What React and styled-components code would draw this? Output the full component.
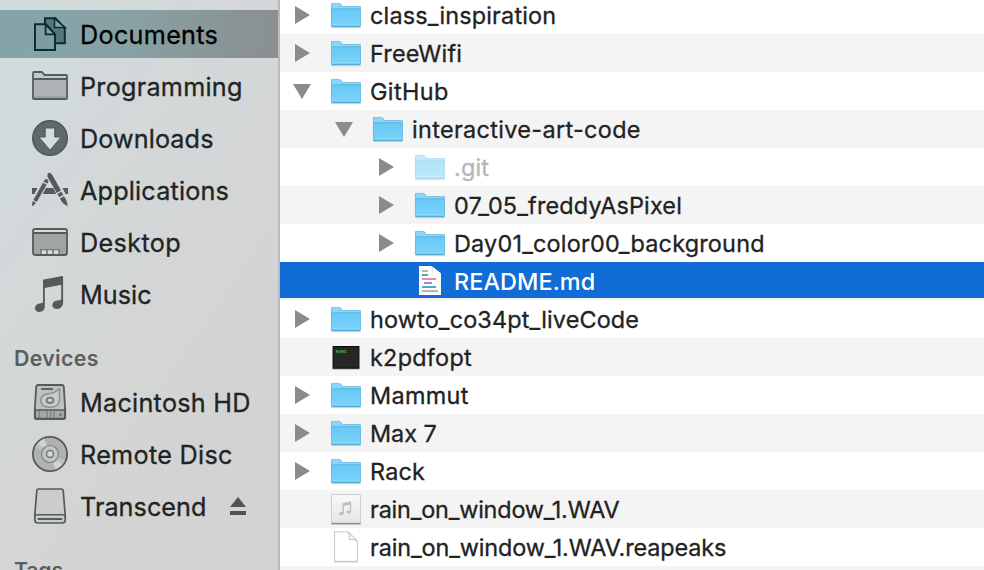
import React from "react";
import styled, { createGlobalStyle } from "styled-components";

const GlobalStyle = createGlobalStyle`
  * { box-sizing: border-box; }
  html, body { margin: 0; padding: 0; overflow: hidden; background: #fff; }
  body { font-family: Inter, "Noto Sans", sans-serif; }
`;

const Window = styled.div`
  display: flex;
  width: 984px;
  height: 570px;
  overflow: hidden;
  background: #fff;
`;

const Sidebar = styled.nav`
  flex: 0 0 280px;
  height: 570px;
  padding-top: 10px;
  overflow: hidden;
  border-right: 2px solid #bababa;
  background:
    linear-gradient(125deg, #d1dcdd 0%, #d2d9da 22%, #d4d6d6 50%, #d3d3d3 72%, #d3d3d3 100%);
`;

const SidebarItem = styled.div`
  display: flex;
  align-items: center;
  gap: 12px;
  height: 48px;
  margin-bottom: 4px;
  padding-left: 32px;
  background: ${(p) => (p.$selected ? "linear-gradient(100deg, #86a4a8 0%, #87a2a5 45%, #8a9394 85%, #8b9091 100%)" : "none")};
  color: ${(p) => (p.$selected ? "#000" : "#202424")};
`;

const SidebarIcon = styled.svg`
  flex: none;
  display: block;
  width: 36px;
  height: 36px;
  color: #555a5a;
`;

const SidebarLabel = styled.span`
  font-size: 25.2px;
  line-height: 30px;
  white-space: pre;
  letter-spacing: ${(p) => p.$tracking}px;
  -webkit-text-stroke: 0.3px currentColor;
  transform: translateY(1px);
`;

const EjectIcon = styled.svg`
  flex: none;
  width: 16px;
  height: 18px;
  margin-left: auto;
  margin-right: 32px;
  fill: #525252;
`;

const SectionHeading = styled.h2`
  height: 56px;
  margin: 0;
  padding: 22px 0 0 14px;
  color: #5b5e5e;
  font-size: 21.3px;
  font-weight: 600;
  line-height: 28px;
  letter-spacing: ${(p) => p.$tracking}px;
`;

const FileList = styled.main`
  flex: 1;
  min-width: 0;
  margin-top: -4px;
`;

const rowFill = (p) => {
  if (p.$selected) return "linear-gradient(#116cd6 36px, #f4f4f4 36px)";
  return p.$striped ? "#f4f4f4" : "#fff";
};

const rowColor = (p) => {
  if (p.$selected) return "#fff";
  return p.$dimmed ? "#b6b6b6" : "#222";
};

const FileRow = styled.div`
  display: flex;
  align-items: center;
  height: 38px;
  padding-left: ${(p) => 12 + p.$depth * 42}px;
  background: ${rowFill};
  color: ${rowColor};
`;

const DisclosureSlot = styled.span`
  flex: none;
  display: flex;
  align-items: center;
  justify-content: center;
  width: 20px;
  height: 32px;
  margin-right: 18px;
`;

const DisclosureArrow = styled.svg`
  width: 20px;
  height: 20px;
  fill: #8b8b8b;
`;

const FileIcon = styled.svg`
  flex: none;
  display: block;
  width: 32px;
  height: 32px;
  margin-right: 8px;
  overflow: visible;
  opacity: ${(p) => (p.$dimmed ? 0.5 : 1)};
`;

const FileName = styled.span`
  padding-top: 2px;
  font-size: 23.4px;
  font-weight: ${(p) => (p.$selected ? 500 : 400)};
  line-height: 30px;
  white-space: pre;
  letter-spacing: ${(p) => p.$tracking}px;
  -webkit-text-stroke: ${(p) => (p.$selected ? "0" : "0.3px")} currentColor;
`;

const icons = {
  documents: (
    <g fill="none" stroke="#092d33" strokeWidth="2">
      <path d="M13 8V2.3h10.5l9.3 10v15H24" fill="#56777c" />
      <path d="M22.5 2.500V11.500H33z" fill="#86a4a8" strokeWidth="1.6" />
      <path d="M3 8.2h11L23 18.5V34H3z" fill="#7f9da1" />
      <path d="M13.6 8.5V18.4H23z" fill="#86a4a8" strokeWidth="1.8" />
    </g>
  ),
  folder: (
    <g>
      <path d="M1 30V5.2Q1 4 2.2 4H10l2.5 3H34q1 0 1 1V30q0 1-1 1H2q-1 0-1-1z" fill="#c3cacb" />
      <path d="M2 12h32v18H2z" fill="#adb3b4" />
      <path d="M2 28h32v2.5H2z" fill="#9da3a4" />
      <path d="M1 30V5.2Q1 4 2.2 4H10l2.5 3H34q1 0 1 1V30q0 1-1 1H2q-1 0-1-1zM1 11h34" fill="none" stroke="currentColor" strokeWidth="1.8" />
    </g>
  ),
  downloads: (
    <g>
      <circle cx="18" cy="18" r="17.3" fill="#5f686a" stroke="#4e5658" strokeWidth="1.4" />
      <path d="M13.2 8h9.6v9h6.4L18 30.2 6.8 17h6.4z" fill="#d5dada" stroke="#4e5658" strokeWidth="1" />
    </g>
  ),
  applications: (
    <g fill="currentColor">
      <path d="M0 16h5.6L2.3 22H0zM13.8 16h7.4l3.2 6H10.8zM30.5 16H36v6h-2.4z" />
      <path d="M15.6 2.2Q16.4.3 18.4 1L20.3 3 29 18.6l-4.2 2.5L15.5 5z" />
      <path d="M25.4 22.1l4.1-2.4 1.7 3.1-4 2.4zM28 26.4l3.8-2.2Q35.5 28.5 35.6 34.2 30 31.5 28 26.4z" />
      <path d="M12.2 8.6Q13.2 6.4 15.2 7.3 17 8.3 16.2 10.3L15.2 11.6 11.6 9.7z" />
      <path d="M11 10.8l3.6 2L4.7 30 1.4 28zM.9 29l2.900 1.800Q2.500 33.300.2 34.300q-.4-3 .7-5.300z" />
    </g>
  ),
  desktop: (
    <g>
      <rect x="1" y="5" width="34" height="26" rx="2.2" fill="#9fa4a4" />
      <path d="M2 5.8h32V8H2z" fill="#d5dada" />
      <path d="M8 25h20v6H8z" fill="#777c7c" />
      <path d="M9.7 26.2h4.4v4H9.7zM15.8 26.2h4.4v4h-4.4zM21.9 26.2h4.4v4h-4.4z" fill="#d5dada" />
      <rect x="1" y="5" width="34" height="26" rx="2.2" fill="none" stroke="currentColor" strokeWidth="1.8" />
      <path d="M1 9h34" stroke="currentColor" strokeWidth="1.8" />
    </g>
  ),
  music: (
    <g fill="currentColor">
      <path d="M11 4.6Q11 3.8 11.8 3.6L30.2.1q.9-.1.9.8V28q-1.800 5-6 5-4.600-.2-4.800-3.800.2-3.900 4.900-4.700 4-.3 4-1.500V8.700L12.800 12v19q-.3 4.700-5.400 5-4.200-.2-4.500-3.800.3-4 4.700-4.800Q11 27.200 11 25.800z" />
    </g>
  ),
  hardDisk: (
    <g stroke="currentColor" strokeLinejoin="round">
      <path d="M6.200 1h23.600q1.700 0 2 1.700L33.200 26v7.200q0 1.800-1.800 1.800H4.600q-1.800 0-1.800-1.800V26L4.200 2.700Q4.500 1 6.200 1z" fill="#bfc2c1" strokeWidth="1.800" />
      <path d="M3.200 26h29.600v7q0 1.500-1.500 1.500H4.700q-1.500 0-1.500-1.500z" fill="#a5a9a8" strokeWidth="1.500" />
      <path d="M7.300 27v7M15.200 27v7M18.600 27v7M22 27v7" stroke="#7c807f" strokeWidth="1.300" />
      <path d="M27.600 29.800h1.800v1.800h-1.800z" fill="#4d5050" stroke="none" />
      <path d="M9 5h12" strokeWidth="1.800" />
      <path d="M27.500 4.500V16Q27 23.200 18 23.300 9 22.800 8.800 16.400 9 10.500 17.500 9.600q5-.4 10-5.100z" fill="#c8cbca" stroke="#8a8e8d" strokeWidth="1.500" />
      <ellipse cx="18" cy="16.300" rx="3.400" ry="2.700" fill="#cfd2d1" stroke="#737776" strokeWidth="1.800" />
    </g>
  ),
  disc: (
    <g>
      <circle cx="18" cy="18" r="17.100" fill="#afb2b1" stroke="currentColor" strokeWidth="1.800" />
      <path d="M18 18L5.500 7.500Q8.500 4 12.500 2.600zM18 18l12.500 10.500q-3 3.500-7 4.900z" fill="#d0d3d2" />
      <path d="M18 18L3 11.500 5.500 7.500zM18 18l15 6.500-2.500 4z" fill="#bfc2c1" />
      <circle cx="18" cy="18" r="8.500" fill="#c2c5c4" stroke="#7d8180" strokeWidth="1.200" />
      <circle cx="18" cy="18" r="3.500" fill="#d5d7d7" stroke="#707473" strokeWidth="1.400" />
    </g>
  ),
  externalDisk: (
    <g fill="none" stroke="currentColor">
      <path d="M6.500 1h23q1.500 0 1.700 1.500L33.200 27v5q0 3-3 3H5.800q-3 0-3-3v-5L4.800 2.500Q5 1 6.500 1z" fill="#cbcdcc" strokeWidth="1.700" />
      <path d="M3 28.500Q3.500 26.800 5.500 26.800h25q2 0 2.500 1.700" strokeWidth="1.400" />
      <path d="M6.500 31h23" strokeWidth="2.200" strokeLinecap="round" />
    </g>
  ),
};

const fileIcons = {
  folder: (
    <g>
      <path d="M1.500 28.500h29" stroke="#8a9aa2" strokeOpacity=".45" strokeWidth="1.400" />
      <path d="M1 26.700V5q0-.8.800-.8H9.500q.8 0 1.300.6l1.700 2.400H30q.8 0 .8.800V26.700q0 1-.9 1H1.900q-.9 0-.9-1z" fill="#8cd5f8" />
      <path d="M1 9.800h29.800v16.900q0 1-.9 1H1.900q-.9 0-.9-1z" fill="url(#folderFront)" />
      <path d="M1.500 9.800h29" stroke="#5eb6e0" strokeWidth="1" />
      <path d="M1.500 25.400h29" stroke="#8ddafc" strokeWidth=".8" />
      <path d="M1.400 27.400h29" stroke="#4fa8d1" strokeWidth="1" />
      <path d="M1.400 27V5q0-.6.600-.6H9.500q.6 0 1.100.6l1.800 2.500h17.500q.6 0 .6.600V27" fill="none" stroke="#5fb4dc" strokeOpacity=".75" strokeWidth=".8" />
    </g>
  ),
  markdown: (
    <g>
      <path d="M5 1h12.500l9.500 7.500V30H5z" fill="#fdfdfb" />
      <path d="M17.500 1v2.500q0 5 1.500 5h8z" fill="#e4e4e4" />
      <path d="M19 2.200l8 6.300h-8z" fill="#fff" />
      <path d="M8 6h6M8 26h16" stroke="#b4b4b4" strokeWidth="2" />
      <path d="M8 10h6M8 22h14" stroke="#50adb8" strokeWidth="2" />
      <path d="M8 14h14" stroke="#dc939b" strokeWidth="2" />
      <path d="M10 18h8" stroke="#a57eff" strokeWidth="2" />
    </g>
  ),
  executable: (
    <g>
      <rect x="2" y="5.200" width="28" height="23.600" rx="1" fill="#000" fillOpacity=".22" />
      <rect x="3.200" y="5.500" width="25.600" height="21.700" fill="#262626" stroke="#0a0a0a" />
      <text x="5.800" y="12" fill="#3fc355" fontFamily="Liberation Mono, monospace" fontWeight="700" fontSize="4.600">exec</text>
    </g>
  ),
  audio: (
    <g>
      <rect x="1" y="1.800" width="30" height="30" rx="1" fill="#000" fillOpacity=".2" />
      <rect x="1.500" y="1.500" width="29" height="28.700" rx=".8" fill="url(#audioFace)" stroke="#c9c9c9" strokeWidth=".8" />
      <path d="M1.500 30.500h29" stroke="#8e8e8e" strokeWidth="1.200" />
      <path d="M13.200 20V10.800l7.300-1.500v9.200" fill="none" stroke="#bdbdbd" strokeWidth="1.300" />
      <path d="M13.200 12l7.300-1.500" stroke="#bdbdbd" strokeWidth="1.800" />
      <ellipse cx="11.300" cy="20.600" rx="2.200" ry="1.700" fill="#bdbdbd" />
      <ellipse cx="18.700" cy="19.100" rx="2.200" ry="1.700" fill="#bdbdbd" />
    </g>
  ),
  blank: (
    <g>
      <path d="M4 31h24" stroke="#000" strokeOpacity=".18" strokeWidth="1.200" />
      <path d="M4.600.8h13.600l9.200 9.200v20.300H4.600z" fill="#fff" stroke="#bfbfbf" strokeWidth=".9" />
      <path d="M18.200.8q1.800 3 .9 7.800 5-.8 8.300 1.400z" fill="#f4f4f4" stroke="#bfbfbf" strokeWidth=".9" />
    </g>
  ),
};

const favorites = [
  { label: "Documents", icon: "documents", tracking: 0.3, selected: true },
  { label: "Programming", icon: "folder", tracking: 0.25 },
  { label: "Downloads", icon: "downloads", tracking: 0.1 },
  { label: "Applications", icon: "applications", tracking: 0.18 },
  { label: "Desktop", icon: "desktop", tracking: 0.37 },
  { label: "Music", icon: "music", tracking: 0.05 },
];

const devices = [
  { label: "Macintosh HD", icon: "hardDisk", tracking: 0.27 },
  { label: "Remote Disc", icon: "disc", tracking: 0.3 },
  { label: "Transcend", icon: "externalDisk", tracking: 0.05, ejectable: true },
];

const files = [
  { name: "class_inspiration", tracking: 0.18, arrow: "closed" },
  { name: "FreeWifi", tracking: 0.18, arrow: "closed" },
  { name: "GitHub", tracking: 0.4, arrow: "open" },
  { name: "interactive-art-code", tracking: 0.35, arrow: "open", depth: 1 },
  { name: ".git", tracking: 0.2, arrow: "closed", depth: 2, dimmed: true },
  { name: "07_05_freddyAsPixel", tracking: 0.17, arrow: "closed", depth: 2 },
  { name: "Day01_color00_background", tracking: 0.21, arrow: "closed", depth: 2 },
  { name: "README.md", tracking: 0.08, icon: "markdown", depth: 2, selected: true },
  { name: "howto_co34pt_liveCode", tracking: 0.16, arrow: "closed" },
  { name: "k2pdfopt", tracking: 0.28, icon: "executable" },
  { name: "Mammut", tracking: 0.34, arrow: "closed" },
  { name: "Max 7", tracking: -0.03, arrow: "closed" },
  { name: "Rack", tracking: 0.19, arrow: "closed" },
  { name: "rain_on_window_1.WAV", tracking: -0.18, icon: "audio" },
  { name: "rain_on_window_1.WAV.reapeaks", tracking: -0.115, icon: "blank" },
];

const SharedGradients = styled.svg`
  position: absolute;
  width: 0;
  height: 0;
`;

function SidebarEntry({ item }) {
  return (
    <SidebarItem $selected={item.selected}>
      <SidebarIcon viewBox="0 0 36 36">{icons[item.icon]}</SidebarIcon>
      <SidebarLabel $tracking={item.tracking}>{item.label}</SidebarLabel>
      {item.ejectable && (
        <EjectIcon viewBox="0 0 16 18">
          <path d="M8 0l8 10H0zM0 14h16v4H0z" />
        </EjectIcon>
      )}
    </SidebarItem>
  );
}

function FileEntry({ file, striped }) {
  return (
    <FileRow $depth={file.depth || 0} $striped={striped} $selected={file.selected} $dimmed={file.dimmed}>
      <DisclosureSlot>
        {file.arrow && (
          <DisclosureArrow viewBox="0 0 20 20">
            <path d={file.arrow === "open" ? "M1 3h18L10 18z" : "M3 1l15 9-15 9z"} />
          </DisclosureArrow>
        )}
      </DisclosureSlot>
      <FileIcon viewBox="0 0 32 32" $dimmed={file.dimmed}>{fileIcons[file.icon || "folder"]}</FileIcon>
      <FileName $tracking={file.tracking} $selected={file.selected}>{file.name}</FileName>
    </FileRow>
  );
}

export default function App() {
  return (
    <Window>
      <GlobalStyle />
      <SharedGradients aria-hidden="true">
        <defs>
          <linearGradient id="folderFront" x1="0" y1="0" x2="0" y2="1">
            <stop offset="0" stopColor="#69c8f5" />
            <stop offset="1" stopColor="#7ad3fa" />
          </linearGradient>
          <linearGradient id="audioFace" x1="0" y1="0" x2="0" y2="1">
            <stop offset="0" stopColor="#f8f8f8" />
            <stop offset="1" stopColor="#e6e6e6" />
          </linearGradient>
        </defs>
      </SharedGradients>
      <Sidebar>
        {favorites.map((item) => <SidebarEntry key={item.label} item={item} />)}
        <SectionHeading $tracking={0.34}>Devices</SectionHeading>
        {devices.map((item) => <SidebarEntry key={item.label} item={item} />)}
        <SectionHeading $tracking={-0.18}>Tags</SectionHeading>
      </Sidebar>
      <FileList>
        {files.map((file, i) => <FileEntry key={file.name} file={file} striped={i % 2 === 1} />)}
        <FileRow $depth={0} $striped />
      </FileList>
    </Window>
  );
}
